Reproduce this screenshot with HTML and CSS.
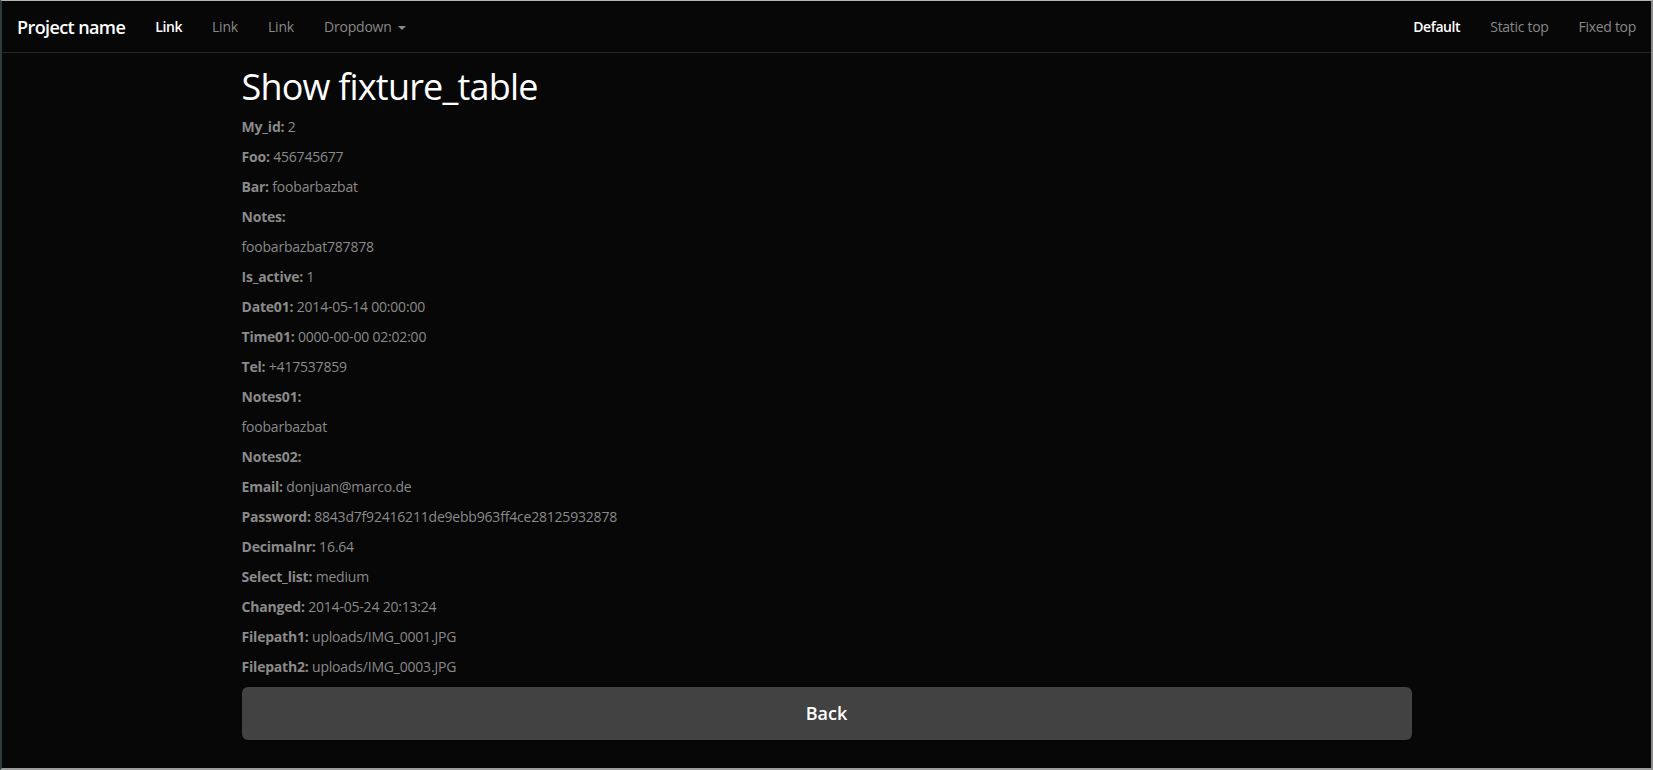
FILE: index.html
```html
<!DOCTYPE html>
<html lang="en">
<head>
<meta charset="utf-8">
<title>Show fixture_table</title>
<link rel="stylesheet" href="styles.css">
</head>
<body>
<div class="frame">
  <nav class="navbar">
    <div class="nav-left">
      <a class="brand" href="#">Project name</a>
      <ul class="nav">
        <li class="active"><a href="#">Link</a></li>
        <li><a href="#">Link</a></li>
        <li><a href="#">Link</a></li>
        <li><a href="#">Dropdown <span class="caret"></span></a></li>
      </ul>
    </div>
    <ul class="nav nav-right">
      <li class="active"><a href="#">Default</a></li>
      <li><a href="#">Static top</a></li>
      <li><a href="#">Fixed top</a></li>
    </ul>
  </nav>
  <main class="container">
    <h1>Show fixture_table</h1>
    <p><strong>My_id:</strong> 2</p>
    <p><strong>Foo:</strong> 456745677</p>
    <p><strong>Bar:</strong> foobarbazbat</p>
    <p><strong>Notes:</strong></p>
    <p>foobarbazbat787878</p>
    <p><strong>Is_active:</strong> 1</p>
    <p><strong>Date01:</strong> 2014-05-14 00:00:00</p>
    <p><strong>Time01:</strong> 0000-00-00 02:02:00</p>
    <p><strong>Tel:</strong> +417537859</p>
    <p><strong>Notes01:</strong></p>
    <p>foobarbazbat</p>
    <p><strong>Notes02:</strong></p>
    <p><strong>Email:</strong> donjuan@marco.de</p>
    <p><strong>Password:</strong> 8843d7f92416211de9ebb963ff4ce28125932878</p>
    <p><strong>Decimalnr:</strong> 16.64</p>
    <p><strong>Select_list:</strong> medium</p>
    <p><strong>Changed:</strong> 2014-05-24 20:13:24</p>
    <p><strong>Filepath1:</strong> uploads/IMG_0001.JPG</p>
    <p><strong>Filepath2:</strong> uploads/IMG_0003.JPG</p>
    <a class="btn" href="#">Back</a>
  </main>
</div>
</body>
</html>
```
FILE: styles.css
```css
html, body {
  margin: 0;
  padding: 0;
  background: #070707;
  overflow: hidden;
}
* { box-sizing: border-box; }

.frame {
  width: 1653px;
  height: 770px;
  background: #070707;
  border-top: 1px solid #b4b4b4;
  border-left: 2px solid #2d3b3c;
  border-right: 2px solid #8c8c8c;
  border-bottom: 2px solid #9c9c9c;
  font-family: "Open Sans", "DejaVu Sans", sans-serif;
  color: #8a8a8a;
  font-size: 14px;
}

a { text-decoration: none; }

.navbar {
  height: 52px;
  border-bottom: 1px solid #282828;
  display: flex;
  justify-content: space-between;
  align-items: stretch;
}
.nav-left {
  display: flex;
  align-items: stretch;
}
.brand {
  display: flex;
  align-items: center;
  padding: 0 15px;
  font-size: 18px;
  font-weight: 600;
  color: #ffffff;
  letter-spacing: -0.6px;
}
.nav {
  list-style: none;
  margin: 0;
  padding: 0;
  display: flex;
  align-items: stretch;
}
.nav li a {
  display: flex;
  align-items: center;
  height: 100%;
  padding: 0 15px;
  color: #888888;
  font-size: 14px;
  letter-spacing: -0.2px;
}
.nav li.active a {
  color: #ffffff;
  font-weight: 600;
  letter-spacing: -0.4px;
}
.nav-right li a {
  letter-spacing: -0.3px;
}
.caret {
  display: inline-block;
  width: 0;
  height: 0;
  margin-left: 6px;
  margin-top: 2px;
  border-top: 4px solid #888888;
  border-left: 4px solid transparent;
  border-right: 4px solid transparent;
}

.container {
  width: 1170px;
  margin: 0 auto;
}
h1 {
  margin: 14px 0 10px;
  font-size: 36px;
  line-height: 40px;
  font-weight: 500;
  color: #ffffff;
  letter-spacing: -0.8px;
}
p {
  margin: 0 0 10px;
  line-height: 20px;
  font-size: 14px;
  letter-spacing: -0.2px;
}
strong {
  font-weight: 700;
}
.btn {
  display: block;
  width: 100%;
  height: 53px;
  line-height: 53px;
  text-align: center;
  background: #424242;
  border-radius: 6px;
  color: #ffffff;
  font-size: 18px;
  font-weight: 600;
}
```
